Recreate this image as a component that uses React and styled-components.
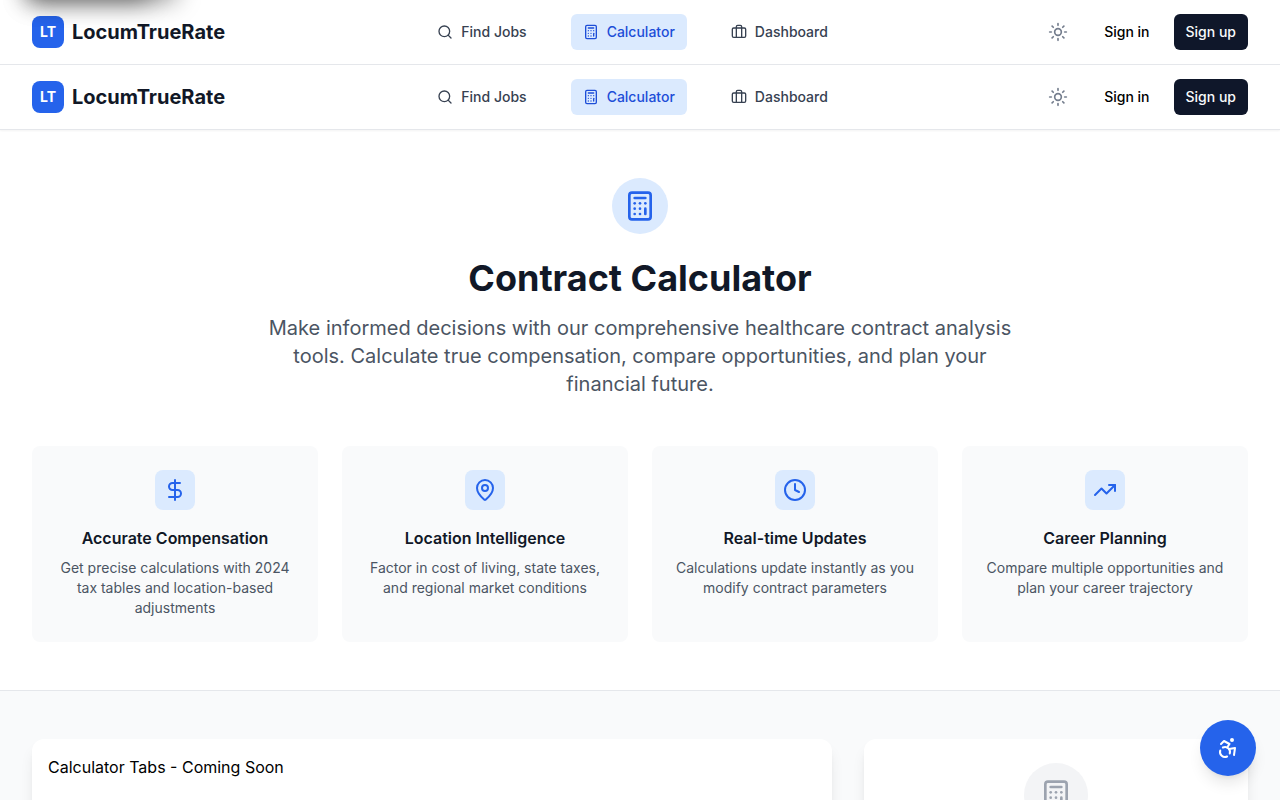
import React from 'react';
import styled, { createGlobalStyle, css } from 'styled-components';
import {
  Accessibility, Briefcase, Calculator, Clock, DollarSign, MapPin, Search, Sun, TrendingUp,
} from 'lucide-react';

const GlobalStyle = createGlobalStyle`
  *, *::before, *::after { box-sizing: border-box; }
  body {
    margin: 0;
    height: 800px;
    overflow: hidden;
    background: #fff;
    color: #000;
    font-family: Inter, sans-serif;
    font-size: 16px;
    line-height: 24px;
    -webkit-font-smoothing: antialiased;
  }
  h1, h3, p { margin: 0; }
  svg { display: block; flex-shrink: 0; }
`;

const Page = styled.div`
  height: 800px;
  overflow: hidden;
  display: flex;
  flex-direction: column;
  background: #f9fafb;
`;

const SkipLink = styled.a`
  position: absolute;
  top: -48px;
  left: 27px;
  width: ${(p) => p.$width}px;
  height: 40px;
  border-radius: 6px;
  background: #2563eb;
  box-shadow: ${(p) => p.$shadow};
`;

const Header = styled.header`
  flex-shrink: 0;
  height: 65px;
  padding: 0 32px;
  display: flex;
  align-items: center;
  justify-content: space-between;
  background: #fff;
  border-bottom: 1px solid #e5e7eb;
  ${(p) => p.$raised && css`box-shadow: 0 1px 2px 0 rgba(0, 0, 0, 0.05); z-index: 1;`}
`;

const Brand = styled.div`
  display: flex;
  align-items: center;
  gap: 8px;
  color: #111827;
  font-size: 20px;
  line-height: 28px;
  font-weight: 700;
`;

const BrandMark = styled.span`
  width: 32px;
  height: 32px;
  display: flex;
  align-items: center;
  justify-content: center;
  border-radius: 8px;
  background: #2563eb;
  color: #fff;
  font-size: 14px;
  line-height: 20px;
`;

const Nav = styled.nav`
  display: flex;
  gap: 32px;
`;

const NavItem = styled.a`
  display: flex;
  align-items: center;
  gap: 8px;
  padding: 8px 12px;
  border-radius: 6px;
  font-size: 14px;
  line-height: 20px;
  font-weight: 500;
  color: ${(p) => (p.$active ? '#1d4ed8' : '#374151')};
  background: ${(p) => (p.$active ? '#dbeafe' : 'transparent')};
`;

const Actions = styled.div`
  display: flex;
  align-items: center;
  gap: 16px;
`;

const ThemeToggle = styled.span`
  padding: 8px;
  color: #747d8d;
`;

const AuthButtons = styled.div`
  display: flex;
  gap: 12px;
`;

const Button = styled.button`
  height: 36px;
  padding: 0 12px;
  border: 0;
  border-radius: 6px;
  font: 500 14px/20px Inter, sans-serif;
  color: ${(p) => (p.$primary ? '#f8fafc' : '#000')};
  background: ${(p) => (p.$primary ? '#0f172a' : 'transparent')};
`;

const Hero = styled.section`
  flex-shrink: 0;
  display: flex;
  flex-direction: column;
  align-items: center;
  padding: 48px 32px;
  background: #fff;
  border-bottom: 1px solid #e5e7eb;
  text-align: center;
`;

const IconCircle = styled.div`
  width: ${(p) => p.$size}px;
  height: ${(p) => p.$size}px;
  display: flex;
  align-items: center;
  justify-content: center;
  border-radius: 50%;
  background: ${(p) => (p.$muted ? '#f3f4f6' : '#dbeafe')};
  color: ${(p) => (p.$muted ? '#9ca3af' : '#2563eb')};
`;

const Title = styled.h1`
  margin: 24px 0 16px;
  color: #111827;
  font-size: 36px;
  line-height: 40px;
  font-weight: 700;
`;

const Lead = styled.p`
  max-width: 768px;
  color: #4b5563;
  font-size: 20px;
  line-height: 28px;
`;

const Features = styled.div`
  width: 100%;
  margin-top: 48px;
  display: grid;
  grid-template-columns: repeat(4, 1fr);
  gap: 24px;
`;

const Feature = styled.div`
  display: flex;
  flex-direction: column;
  align-items: center;
  padding: 24px;
  border-radius: 8px;
  background: #f9fafb;
`;

const FeatureIcon = styled.div`
  padding: 8px;
  border-radius: 8px;
  background: #dbeafe;
  color: #2563eb;
`;

const FeatureTitle = styled.h3`
  margin: 16px 0 8px;
  color: #111827;
  font-size: 16px;
  line-height: 24px;
  font-weight: 600;
`;

const FeatureText = styled.p`
  color: #4b5563;
  font-size: 14px;
  line-height: 20px;
`;

const Workspace = styled.main`
  flex-shrink: 0;
  padding: 48px 32px;
  display: grid;
  grid-template-columns: 800px 1fr;
  gap: 32px;
`;

const Panel = styled.section`
  height: 320px;
  padding: ${(p) => p.$padding}px;
  display: flex;
  flex-direction: column;
  align-items: ${(p) => (p.$centered ? 'center' : 'flex-start')};
  border-radius: 12px;
  background: #fff;
  box-shadow: 0 10px 15px -3px rgba(0, 0, 0, 0.1), 0 4px 6px -4px rgba(0, 0, 0, 0.1);
`;

const AccessibilityButton = styled.button`
  position: fixed;
  right: 24px;
  bottom: 24px;
  z-index: 2;
  width: 56px;
  height: 56px;
  padding: 0;
  display: flex;
  align-items: center;
  justify-content: center;
  border: 0;
  border-radius: 50%;
  background: #2563eb;
  color: #fff;
  box-shadow: 0 10px 15px -3px rgba(0, 0, 0, 0.1), 0 4px 6px -4px rgba(0, 0, 0, 0.1);
`;

const navItems = [
  { label: 'Find Jobs', icon: Search },
  { label: 'Calculator', icon: Calculator, active: true },
  { label: 'Dashboard', icon: Briefcase },
];

const features = [
  { icon: DollarSign, title: 'Accurate Compensation', text: 'Get precise calculations with 2024 tax tables and location-based adjustments' },
  { icon: MapPin, title: 'Location Intelligence', text: 'Factor in cost of living, state taxes, and regional market conditions' },
  { icon: Clock, title: 'Real-time Updates', text: 'Calculations update instantly as you modify contract parameters' },
  { icon: TrendingUp, title: 'Career Planning', text: 'Compare multiple opportunities and plan your career trajectory' },
];

function SiteHeader({ raised }) {
  return (
    <Header $raised={raised}>
      <Brand><BrandMark>LT</BrandMark>LocumTrueRate</Brand>
      <Nav>
        {navItems.map(({ label, icon: Icon, active }) => (
          <NavItem key={label} $active={active}><Icon size={16} />{label}</NavItem>
        ))}
      </Nav>
      <Actions>
        <ThemeToggle><Sun size={20} /></ThemeToggle>
        <AuthButtons>
          <Button>Sign in</Button>
          <Button $primary>Sign up</Button>
        </AuthButtons>
      </Actions>
    </Header>
  );
}

export default function App() {
  return (
    <Page>
      <GlobalStyle />
      <SiteHeader />
      <SiteHeader raised />
      <Hero>
        <IconCircle $size={56}><Calculator size={32} /></IconCircle>
        <Title>Contract Calculator</Title>
        <Lead>
          Make informed decisions with our comprehensive healthcare contract analysis tools.
          Calculate true compensation, compare opportunities, and plan your financial future.
        </Lead>
        <Features>
          {features.map(({ icon: Icon, title, text }) => (
            <Feature key={title}>
              <FeatureIcon><Icon size={24} /></FeatureIcon>
              <FeatureTitle>{title}</FeatureTitle>
              <FeatureText>{text}</FeatureText>
            </Feature>
          ))}
        </Features>
      </Hero>
      <Workspace>
        <Panel $padding={16}>Calculator Tabs - Coming Soon</Panel>
        <Panel $padding={24} $centered>
          <IconCircle $size={64} $muted><Calculator size={32} /></IconCircle>
        </Panel>
      </Workspace>
      <AccessibilityButton aria-label="Accessibility"><Accessibility size={24} /></AccessibilityButton>
      <SkipLink $width={122} $shadow="0 9px 24px rgba(0, 0, 0, 0.45)" />
      <SkipLink $width={150} $shadow="0 9px 24px rgba(0, 0, 0, 0.4)" />
    </Page>
  );
}
